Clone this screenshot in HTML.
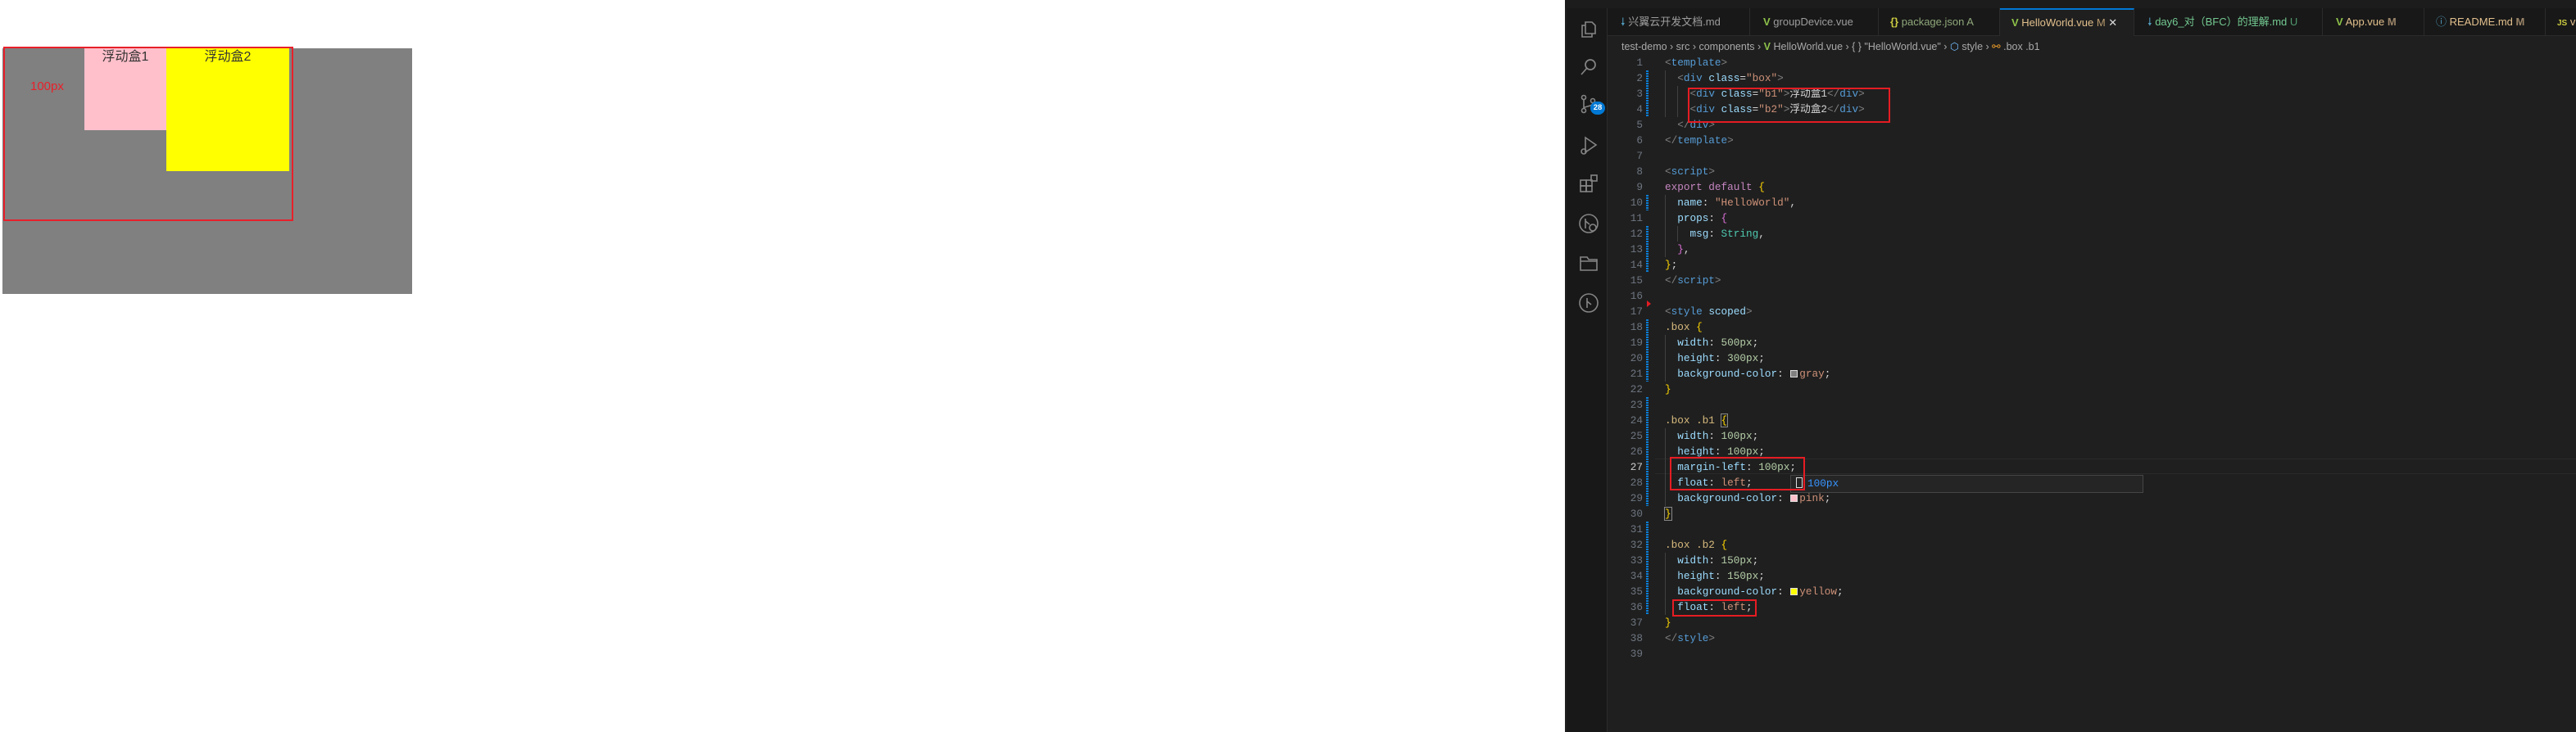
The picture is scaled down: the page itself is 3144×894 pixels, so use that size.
<!DOCTYPE html>
<html><head><meta charset="utf-8"><style>
*{margin:0;padding:0;box-sizing:border-box}
body{width:3144px;height:894px;background:#fff;position:relative;overflow:hidden;font-family:"Liberation Sans","Noto Sans CJK SC",sans-serif}
.a{position:absolute}
.code{position:absolute;left:2032px;font-family:"Liberation Mono","Noto Sans CJK SC",monospace;font-size:12.7px;line-height:19px;height:19px;white-space:pre;color:#d4d4d4}
.ln{position:absolute;left:1962px;width:43px;text-align:right;font-family:"Liberation Mono",monospace;font-size:12.7px;line-height:19px;height:19px;color:#6e7681}
.t{color:#569cd6}.p{color:#808080}.at{color:#9cdcfe}.s{color:#ce9178}.k{color:#c586c0}.b{color:#ffd700}.b2{color:#da70d6}.ty{color:#4ec9b0}.n{color:#b5cea8}.sel{color:#d7ba7d}
.sw{display:inline-block;width:9px;height:9px;border:1px solid #ddd;margin:0 2px 0 1px;vertical-align:-1px}
.tab{position:absolute;top:10px;height:34px;background:#181818;border-right:1px solid #2b2b2b;border-bottom:1px solid #2b2b2b;font-size:13px;line-height:34px;color:#9d9d9d;white-space:nowrap;font-family:"Liberation Sans","Noto Sans CJK SC",sans-serif}
.ic{position:absolute;left:1925px;width:28px;height:28px}
.mk{position:absolute;left:2009px;width:3px;background:repeating-linear-gradient(#0c7dd4 0 2px,transparent 2px 3px)}
.rb{position:absolute;border:2px solid #e51c23}
</style></head><body>
<!-- left demo -->
<div class="a" style="left:3px;top:59px;width:500px;height:300px;background:#808080"></div>
<div class="a" style="left:103px;top:59px;width:100px;height:100px;background:#ffc0cb;text-align:center;font-size:16px;line-height:22px;color:#333">浮动盒1</div>
<div class="a" style="left:203px;top:59px;width:150px;height:150px;background:#ff0;text-align:center;font-size:16px;line-height:22px;color:#333">浮动盒2</div>
<div class="a" style="left:4px;top:57px;width:354px;height:213px;border:2px solid #e8202a"></div>
<div class="a" style="left:37px;top:97px;font-size:15px;color:#e8202a">100px</div>

<!-- editor -->
<div class="a" style="left:1910px;top:0;width:1234px;height:894px;background:#1f1f1f"></div>
<div class="a" style="left:1910px;top:0;width:1234px;height:10px;background:#1c1c1c"></div>
<div class="a" style="left:1912px;top:10px;width:50px;height:884px;background:#181818;border-right:1px solid #2b2b2b"></div>
<div class="a" style="left:1962px;top:10px;width:1182px;height:34px;background:#181818;border-bottom:1px solid #2b2b2b"></div>

<!-- tabs -->
<div class="tab" style="left:1962px;width:174px;padding-left:16px"><span style="color:#519aba">🠗</span> 兴翼云开发文档.md</div>
<div class="tab" style="left:2136px;width:157px;padding-left:16px"><span style="color:#8dc149;font-weight:bold">V</span> groupDevice.vue</div>
<div class="tab" style="left:2293px;width:148px;padding-left:14px;color:#8fa87a"><span style="color:#cbcb41;font-weight:bold">{}</span> package.json A</div>
<div class="tab" style="left:2441px;width:164px;padding-left:14px;background:#1f1f1f;border-top:2px solid #0078d4;border-bottom:none;color:#e2c08d;line-height:32px"><span style="color:#8dc149;font-weight:bold">V</span> HelloWorld.vue <span style="color:#b89a6c">M</span> <span style="color:#ddd">✕</span></div>
<div class="tab" style="left:2605px;width:230px;padding-left:16px;color:#73c991"><span style="color:#519aba">🠗</span> day6_对（BFC）的理解.md <span style="color:#4f9a6d">U</span></div>
<div class="tab" style="left:2835px;width:124px;padding-left:16px;color:#e2c08d"><span style="color:#8dc149;font-weight:bold">V</span> App.vue <span style="color:#9a8468;font-weight:bold">M</span></div>
<div class="tab" style="left:2959px;width:148px;padding-left:14px;color:#e2c08d"><span style="color:#519aba">ⓘ</span> README.md <span style="color:#9a8468;font-weight:bold">M</span></div>
<div class="tab" style="left:3107px;width:60px;padding-left:14px;color:#e2c08d"><span style="color:#cbcb41;font-size:10px;font-weight:bold">JS</span> v</div>

<!-- breadcrumb -->
<div class="a" style="left:1979px;top:49px;font-size:12.5px;line-height:16px;color:#a9a9a9;white-space:nowrap">test-demo › src › components › <span style="color:#8dc149;font-weight:bold">V</span> HelloWorld.vue › { } "HelloWorld.vue" › <span style="color:#75beff">⬡</span> style › <span style="color:#ee9d28">⚯</span> .box .b1</div>

<!-- activity icons -->
<svg class="ic" style="top:21px" viewBox="0 0 28 28" fill="none" stroke="#858585" stroke-width="1.6"><path d="M10 6h8l4 4v10h-12z"/><path d="M10 10H6v14h12v-4"/></svg>
<svg class="ic" style="top:68px" viewBox="0 0 28 28" fill="none" stroke="#858585" stroke-width="1.7"><circle cx="16" cy="11" r="6"/><path d="M12 15l-7 8"/></svg>
<svg class="ic" style="top:113px" viewBox="0 0 28 28" fill="none" stroke="#858585" stroke-width="1.6"><circle cx="8" cy="6" r="2.5"/><circle cx="8" cy="22" r="2.5"/><circle cx="19" cy="10" r="2.5"/><path d="M8 8.5v11M19 12.5c0 5-11 4-11 7"/></svg>
<div class="a" style="left:1941px;top:124px;width:18px;height:16px;border-radius:8px;background:#0078d4;color:#fff;font-size:9.5px;font-weight:bold;text-align:center;line-height:16px">28</div>
<svg class="ic" style="top:163px" viewBox="0 0 28 28" fill="none" stroke="#858585" stroke-width="1.6"><path d="M10 5l13 9-13 9z"/><circle cx="8" cy="22" r="3"/></svg>
<svg class="ic" style="top:211px" viewBox="0 0 28 28" fill="none" stroke="#858585" stroke-width="1.6"><rect x="4" y="9" width="7" height="7"/><rect x="11" y="9" width="7" height="7"/><rect x="4" y="16" width="7" height="7"/><rect x="11" y="16" width="7" height="7"/><rect x="17" y="3" width="7" height="7"/></svg>
<svg class="ic" style="top:259px" viewBox="0 0 28 28" fill="none" stroke="#858585" stroke-width="1.6"><circle cx="14" cy="14" r="11"/><circle cx="19" cy="19" r="4"/><path d="M10 8v12M10 11l5 4"/></svg>
<svg class="ic" style="top:307px" viewBox="0 0 28 28" fill="none" stroke="#858585" stroke-width="1.6"><path d="M4 7h8l2 3h10v13H4z M4 12h20"/></svg>
<svg class="ic" style="top:356px" viewBox="0 0 28 28" fill="none" stroke="#858585" stroke-width="1.6"><circle cx="14" cy="14" r="11"/><path d="M12 8v12M12 12l5 4"/></svg>

<!-- current line highlight -->
<div class="a" style="left:2020px;top:560px;width:1124px;height:19px;border-top:1px solid #2a2a2a;border-bottom:1px solid #2a2a2a"></div>
<!-- indent guides -->
<div class="a" style="left:2032px;top:86px;width:1px;height:57px;background:#404040"></div>
<div class="a" style="left:2047px;top:105px;width:1px;height:38px;background:#404040"></div>
<div class="a" style="left:2032px;top:238px;width:1px;height:76px;background:#404040"></div>
<div class="a" style="left:2047px;top:276px;width:1px;height:19px;background:#404040"></div>
<div class="a" style="left:2032px;top:409px;width:1px;height:57px;background:#404040"></div>
<div class="a" style="left:2032px;top:523px;width:1px;height:95px;background:#404040"></div>
<div class="a" style="left:2032px;top:675px;width:1px;height:76px;background:#404040"></div>

<!-- gutter markers -->
<div class="mk" style="top:86px;height:57px"></div>
<div class="mk" style="top:238px;height:19px"></div>
<div class="mk" style="top:276px;height:57px"></div>
<div class="mk" style="top:390px;height:76px"></div>
<div class="mk" style="top:485px;height:133px"></div>
<div class="mk" style="top:637px;height:114px"></div>
<div class="a" style="left:2010px;top:367px;width:0;height:0;border-top:4px solid transparent;border-bottom:4px solid transparent;border-left:5px solid #e51c23"></div>

<!-- line numbers -->
<div class="ln" style="top:67px">1</div><div class="ln" style="top:86px">2</div><div class="ln" style="top:105px">3</div><div class="ln" style="top:124px">4</div><div class="ln" style="top:143px">5</div><div class="ln" style="top:162px">6</div><div class="ln" style="top:181px">7</div><div class="ln" style="top:200px">8</div><div class="ln" style="top:219px">9</div><div class="ln" style="top:238px">10</div><div class="ln" style="top:257px">11</div><div class="ln" style="top:276px">12</div><div class="ln" style="top:295px">13</div><div class="ln" style="top:314px">14</div><div class="ln" style="top:333px">15</div><div class="ln" style="top:352px">16</div><div class="ln" style="top:371px">17</div><div class="ln" style="top:390px">18</div><div class="ln" style="top:409px">19</div><div class="ln" style="top:428px">20</div><div class="ln" style="top:447px">21</div><div class="ln" style="top:466px">22</div><div class="ln" style="top:485px">23</div><div class="ln" style="top:504px">24</div><div class="ln" style="top:523px">25</div><div class="ln" style="top:542px">26</div><div class="ln" style="top:561px;color:#ccc">27</div><div class="ln" style="top:580px">28</div><div class="ln" style="top:599px">29</div><div class="ln" style="top:618px">30</div><div class="ln" style="top:637px">31</div><div class="ln" style="top:656px">32</div><div class="ln" style="top:675px">33</div><div class="ln" style="top:694px">34</div><div class="ln" style="top:713px">35</div><div class="ln" style="top:732px">36</div><div class="ln" style="top:751px">37</div><div class="ln" style="top:770px">38</div><div class="ln" style="top:789px">39</div>

<!-- code -->
<div class="code" style="top:67px"><span class="p">&lt;</span><span class="t">template</span><span class="p">&gt;</span></div>
<div class="code" style="top:86px">  <span class="p">&lt;</span><span class="t">div</span> <span class="at">class</span>=<span class="s">"box"</span><span class="p">&gt;</span></div>
<div class="code" style="top:105px">    <span class="p">&lt;</span><span class="t">div</span> <span class="at">class</span>=<span class="s">"b1"</span><span class="p">&gt;</span>浮动盒1<span class="p">&lt;/</span><span class="t">div</span><span class="p">&gt;</span></div>
<div class="code" style="top:124px">    <span class="p">&lt;</span><span class="t">div</span> <span class="at">class</span>=<span class="s">"b2"</span><span class="p">&gt;</span>浮动盒2<span class="p">&lt;/</span><span class="t">div</span><span class="p">&gt;</span></div>
<div class="code" style="top:143px">  <span class="p">&lt;/</span><span class="t">div</span><span class="p">&gt;</span></div>
<div class="code" style="top:162px"><span class="p">&lt;/</span><span class="t">template</span><span class="p">&gt;</span></div>
<div class="code" style="top:200px"><span class="p">&lt;</span><span class="t">script</span><span class="p">&gt;</span></div>
<div class="code" style="top:219px"><span class="k">export default</span> <span class="b">{</span></div>
<div class="code" style="top:238px">  <span class="at">name</span>: <span class="s">"HelloWorld"</span>,</div>
<div class="code" style="top:257px">  <span class="at">props</span>: <span class="b2">{</span></div>
<div class="code" style="top:276px">    <span class="at">msg</span>: <span class="ty">String</span>,</div>
<div class="code" style="top:295px">  <span class="b2">}</span>,</div>
<div class="code" style="top:314px"><span class="b">}</span>;</div>
<div class="code" style="top:333px"><span class="p">&lt;/</span><span class="t">script</span><span class="p">&gt;</span></div>
<div class="code" style="top:371px"><span class="p">&lt;</span><span class="t">style</span> <span class="at">scoped</span><span class="p">&gt;</span></div>
<div class="code" style="top:390px"><span class="sel">.box</span> <span class="b">{</span></div>
<div class="code" style="top:409px">  <span class="at">width</span>: <span class="n">500px</span>;</div>
<div class="code" style="top:428px">  <span class="at">height</span>: <span class="n">300px</span>;</div>
<div class="code" style="top:447px">  <span class="at">background-color</span>: <span class="sw" style="background:#808080"></span><span class="s">gray</span>;</div>
<div class="code" style="top:466px"><span class="b">}</span></div>
<div class="code" style="top:504px"><span class="sel">.box .b1</span> <span class="b" style="outline:1px solid #888">{</span></div>
<div class="code" style="top:523px">  <span class="at">width</span>: <span class="n">100px</span>;</div>
<div class="code" style="top:542px">  <span class="at">height</span>: <span class="n">100px</span>;</div>
<div class="code" style="top:561px">  <span class="at">margin-left</span>: <span class="n">100px</span>;</div>
<div class="code" style="top:580px">  <span class="at">float</span>: <span class="s">left</span>;</div>
<div class="code" style="top:599px">  <span class="at">background-color</span>: <span class="sw" style="background:#ffc0cb"></span><span class="s">pink</span>;</div>
<div class="code" style="top:618px"><span class="b" style="outline:1px solid #888">}</span></div>
<div class="code" style="top:656px"><span class="sel">.box .b2</span> <span class="b">{</span></div>
<div class="code" style="top:675px">  <span class="at">width</span>: <span class="n">150px</span>;</div>
<div class="code" style="top:694px">  <span class="at">height</span>: <span class="n">150px</span>;</div>
<div class="code" style="top:713px">  <span class="at">background-color</span>: <span class="sw" style="background:#ff0"></span><span class="s">yellow</span>;</div>
<div class="code" style="top:732px">  <span class="at">float</span>: <span class="s">left</span>;</div>
<div class="code" style="top:751px"><span class="b">}</span></div>
<div class="code" style="top:770px"><span class="p">&lt;/</span><span class="t">style</span><span class="p">&gt;</span></div>

<!-- hover widget -->
<div class="a" style="left:2185px;top:580px;width:431px;height:22px;background:#252526;border:1px solid #454545;font-family:'Liberation Mono',monospace;font-size:12.7px;line-height:20px;color:#3794ff;padding-left:6px;white-space:nowrap"><span style="display:inline-block;width:8px;height:13px;border:1px solid #ddd;vertical-align:-2px;margin-right:6px"></span>100px</div>

<!-- red annotation boxes -->
<div class="rb" style="left:2060px;top:107px;width:247px;height:43px"></div>
<div class="rb" style="left:2038px;top:558px;width:165px;height:41px"></div>
<div class="rb" style="left:2041px;top:732px;width:103px;height:21px"></div>
</body></html>
